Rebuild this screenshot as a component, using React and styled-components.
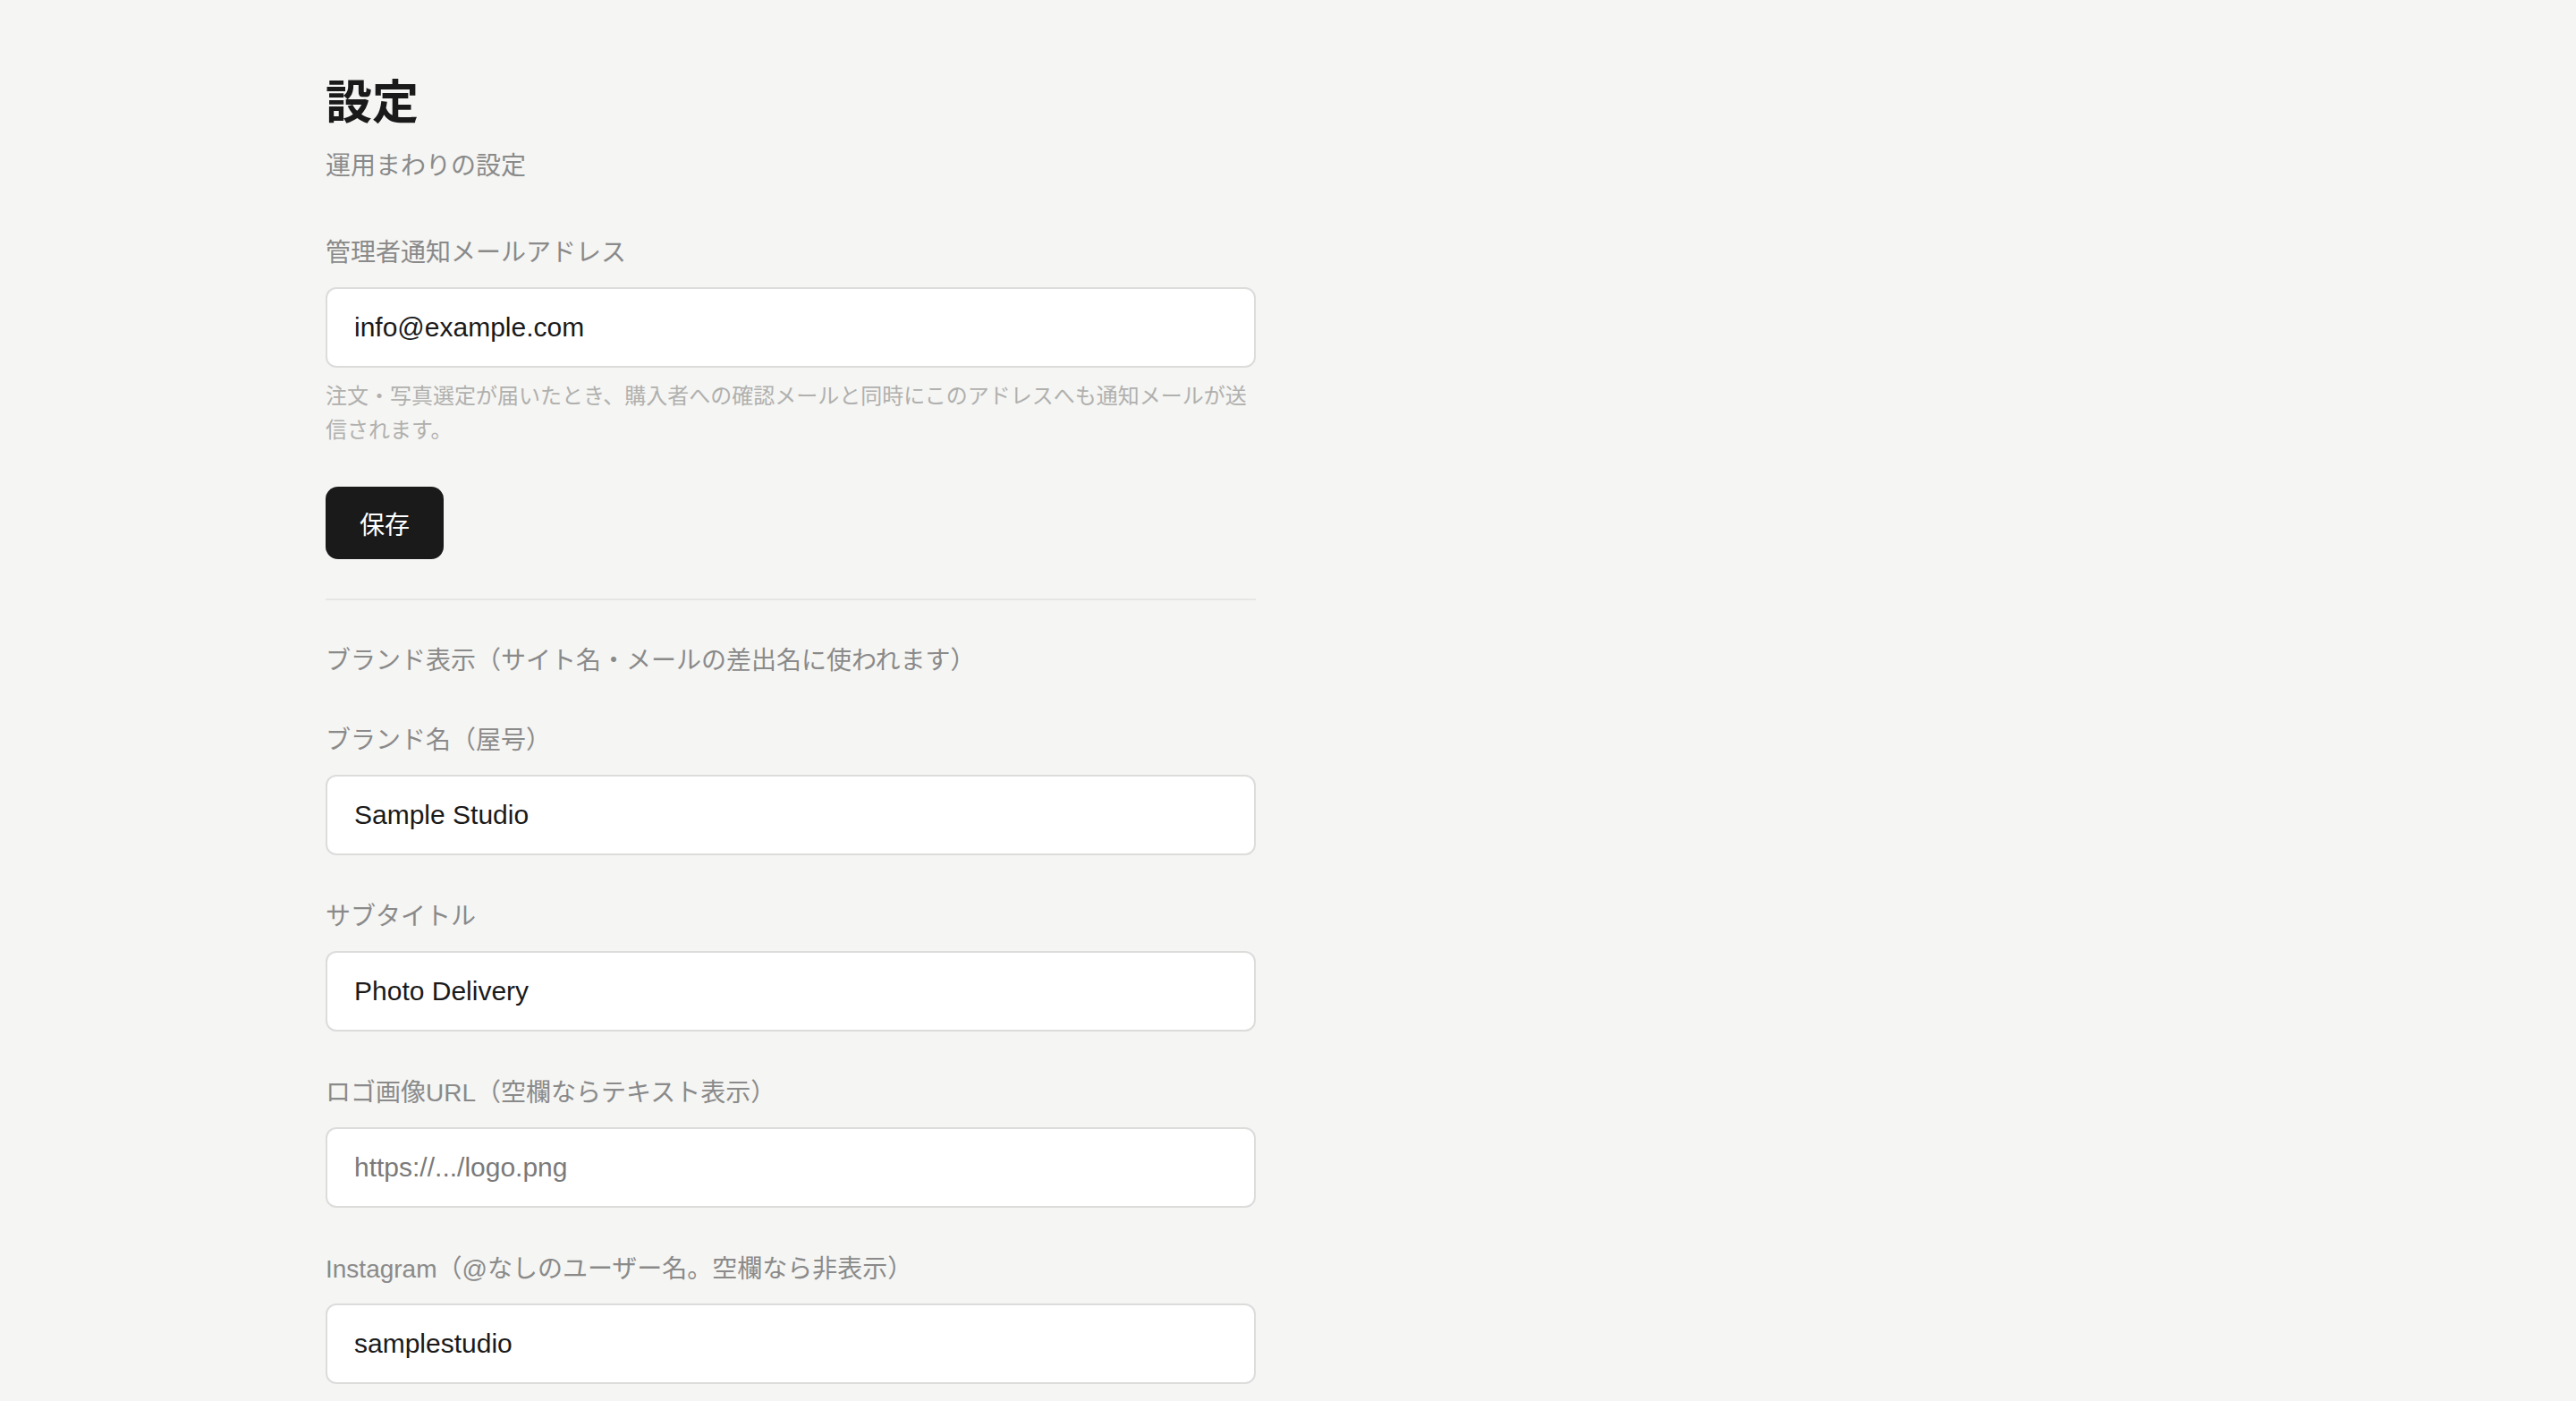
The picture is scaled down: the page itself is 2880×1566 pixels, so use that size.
import React from 'react';
import styled, { createGlobalStyle } from 'styled-components';

const GlobalStyle = createGlobalStyle`
  * {
    box-sizing: border-box;
  }

  body {
    margin: 0;
    background: #f5f5f3;
    font-family: 'Liberation Sans', 'Noto Sans CJK JP', sans-serif;
    color: #1a1a1a;
  }
`;

const Page = styled.main`
  padding: 81px 0 80px 364px;
`;

const Container = styled.div`
  width: 1040px;
  display: flex;
  flex-direction: column;
`;

const Title = styled.h1`
  margin: 0;
  font-size: 52px;
  line-height: 68px;
  font-weight: 700;
  color: #1a1a1a;
`;

const Subtitle = styled.p`
  margin: 16px 0 0;
  font-size: 28px;
  line-height: 42px;
  color: #8a8a8a;
`;

const Field = styled.div`
  display: flex;
  flex-direction: column;
  margin-top: ${(p) => p.$top || 48}px;
`;

const Label = styled.label`
  font-size: 28px;
  line-height: 42px;
  color: #8a8a8a;
  margin-bottom: 17px;
`;

const Input = styled.input`
  width: 100%;
  height: 90px;
  padding: 0 30px;
  border: 2px solid #dcdcda;
  border-radius: 12px;
  background: #ffffff;
  font-family: 'Liberation Sans', 'Noto Sans CJK JP', sans-serif;
  font-size: 30px;
  color: #1a1a1a;
  outline: none;

  &::placeholder {
    color: #7a7a7a;
  }
`;

const Help = styled.p`
  margin: 13px 0 0;
  font-size: 24px;
  line-height: 38px;
  color: #b0b0ae;
`;

const SaveButton = styled.button`
  align-self: flex-start;
  margin-top: 44px;
  height: 81px;
  padding: 0 38px;
  border: none;
  border-radius: 14px;
  background: #1a1a1a;
  color: #ffffff;
  font-family: 'Liberation Sans', 'Noto Sans CJK JP', sans-serif;
  font-size: 28px;
  font-weight: 400;
  cursor: pointer;
`;

const Divider = styled.hr`
  width: 100%;
  margin: 44px 0 0;
  border: none;
  border-top: 2px solid #e6e6e4;
`;

const SectionHeading = styled.h2`
  margin: 47px 0 0;
  font-size: 28px;
  line-height: 42px;
  font-weight: 400;
  color: #8a8a8a;
`;

const brandFields = [
  { id: 'brand', label: 'ブランド名（屋号）', value: 'Sample Studio', top: 47 },
  { id: 'subtitle', label: 'サブタイトル', value: 'Photo Delivery' },
  { id: 'logo', label: 'ロゴ画像URL（空欄ならテキスト表示）', placeholder: 'https://.../logo.png' },
  { id: 'instagram', label: 'Instagram（@なしのユーザー名。空欄なら非表示）', value: 'samplestudio' },
];

const App = () => {
  return (
    <>
      <GlobalStyle />
      <Page>
        <Container>
          <Title>設定</Title>
          <Subtitle>運用まわりの設定</Subtitle>

          <Field $top={55}>
            <Label htmlFor='admin-email'>管理者通知メールアドレス</Label>
            <Input id='admin-email' defaultValue='info@example.com' />
            <Help>
              注文・写真選定が届いたとき、購入者への確認メールと同時にこのアドレスへも通知メールが送信されます。
            </Help>
          </Field>

          <SaveButton type='button'>保存</SaveButton>

          <Divider />

          <SectionHeading>ブランド表示（サイト名・メールの差出名に使われます）</SectionHeading>

          {brandFields.map((f) => (
            <Field key={f.id} $top={f.top}>
              <Label htmlFor={f.id}>{f.label}</Label>
              <Input
                id={f.id}
                defaultValue={f.value}
                placeholder={f.placeholder}
              />
            </Field>
          ))}
        </Container>
      </Page>
    </>
  );
};

export default App;
